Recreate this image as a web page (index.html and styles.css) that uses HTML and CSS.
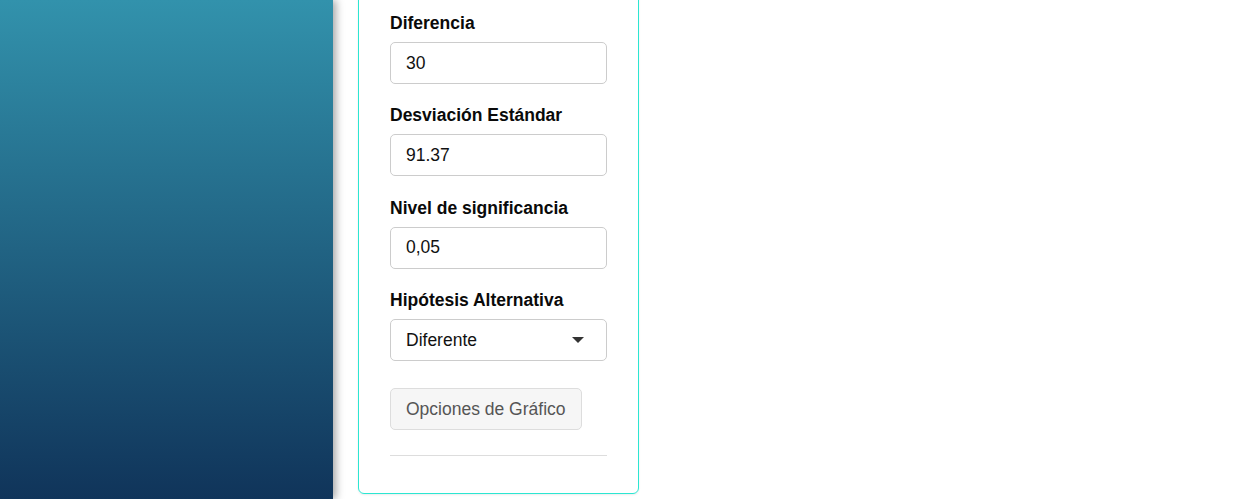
FILE: index.html
```html
<!DOCTYPE html>
<html lang="es">
<head>
    <meta charset="UTF-8">
    <meta name="viewport" content="width=device-width, initial-scale=1.0">
    <title>Prueba de hipótesis</title>
    <link rel="stylesheet" href="styles.css">
</head>
<body>
    <div class="layout">
        <aside class="sidebar"></aside>

        <main class="content">
            <div class="panel">
                <div class="field">
                    <label for="diferencia">Diferencia</label>
                    <input type="text" id="diferencia" value="30">
                </div>
                <div class="field">
                    <label for="desviacion">Desviación Estándar</label>
                    <input type="text" id="desviacion" value="91.37">
                </div>
                <div class="field">
                    <label for="alfa">Nivel de significancia</label>
                    <input type="text" id="alfa" value="0,05">
                </div>
                <div class="field">
                    <label for="alternativa">Hipótesis Alternativa</label>
                    <div class="select-wrap">
                        <select id="alternativa">
                            <option value="diff">Diferente</option>
                            <option value="greater">Mayor</option>
                            <option value="less">Menor</option>
                        </select>
                        <span class="caret"></span>
                    </div>
                </div>

                <button class="btn-options" type="button">Opciones de Gráfico</button>

                <hr class="divider">
            </div>
        </main>
    </div>
</body>
</html>
```

FILE: styles.css
```css
* {
    box-sizing: border-box;
}

body {
    margin: 0;
    background-color: #fff;
    color: #111;
    font-family: "Liberation Sans", Arial, sans-serif;
}

.layout {
    display: flex;
    height: 499px;
    overflow: hidden;
}

.sidebar {
    width: 333px;
    flex-shrink: 0;
    background: linear-gradient(to bottom, #3292ac, #10345a);
    box-shadow: 3px 0 8px rgba(0, 0, 0, 0.35);
    position: relative;
    z-index: 1;
}

.content {
    padding-left: 25px;
}

/* Panel is scrolled, its top edge sits above the window */
.panel {
    width: 281px;
    margin-top: -21px;
    padding: 32px 31px 20px;
    border: 1px solid #2ce6d2;
    border-radius: 6px;
    box-shadow: 0 1px 2px rgba(0, 0, 0, 0.08);
}

.field {
    margin-bottom: 20.4px;
}

.field label {
    display: block;
    font-size: 17.5px;
    font-weight: bold;
    line-height: 23px;
    margin-bottom: 7px;
    color: #0a0a0a;
}

.field input,
.field select {
    display: block;
    width: 100%;
    height: 42px;
    padding: 0 15px;
    font-size: 17.5px;
    font-family: inherit;
    color: #111;
    background-color: #fff;
    border: 1px solid #ccc;
    border-radius: 5px;
    outline: none;
}

.select-wrap {
    position: relative;
}

.field select {
    appearance: none;
    -webkit-appearance: none;
}

.caret {
    position: absolute;
    right: 23px;
    top: 18px;
    width: 0;
    height: 0;
    border-left: 6px solid transparent;
    border-right: 6px solid transparent;
    border-top: 6px solid #333;
    pointer-events: none;
}

.btn-options {
    display: block;
    height: 42px;
    margin-top: 27px;
    padding: 0 15px;
    font-size: 17.5px;
    font-family: inherit;
    color: #555;
    background-color: #f6f6f6;
    border: 1px solid #ddd;
    border-radius: 5px;
}

.divider {
    margin: 25px 0 17px;
    border: none;
    border-top: 1px solid #ddd;
}
```
